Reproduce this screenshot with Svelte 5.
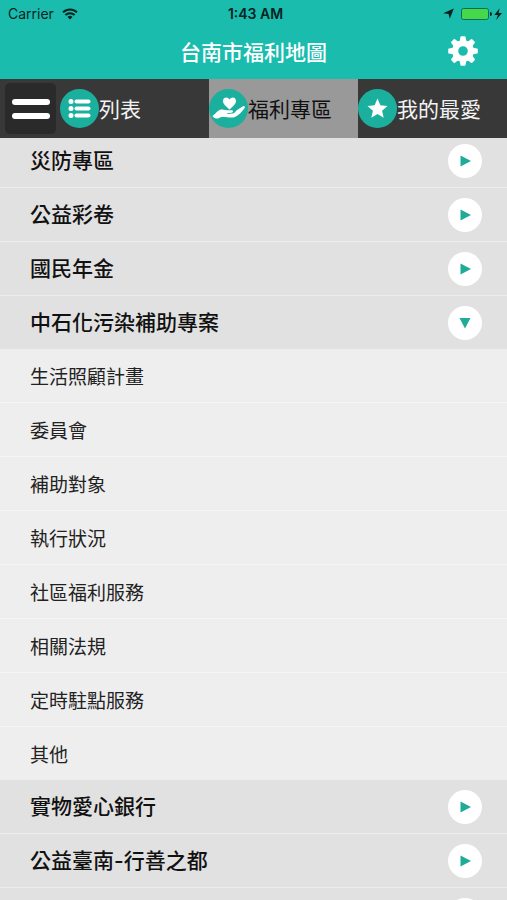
<script lang="ts">
	type Section = {
		title: string;
		items: string[];
	};

	const sections: Section[] = [
		{ title: '災防專區', items: [] },
		{ title: '公益彩卷', items: [] },
		{ title: '國民年金', items: [] },
		{
			title: '中石化污染補助專案',
			items: [
				'生活照顧計畫',
				'委員會',
				'補助對象',
				'執行狀況',
				'社區福利服務',
				'相關法規',
				'定時駐點服務',
				'其他'
			]
		},
		{ title: '實物愛心銀行', items: [] },
		{ title: '公益臺南-行善之都', items: [] },
		{ title: '', items: [] }
	];

	const tabs = [
		{ id: 'list', label: '列表' },
		{ id: 'welfare', label: '福利專區' },
		{ id: 'favorite', label: '我的最愛' }
	];

	const teeth = [0, 45, 90, 135, 180, 225, 270, 315];

	let active = $state('welfare');
	let opened = $state(3);

	function toggle(i: number) {
		opened = opened === i ? -1 : i;
	}
</script>

<svelte:head>
	<title>台南市福利地圖</title>
</svelte:head>

<div class="app">
	<header>
		<div class="status">
			<div class="carrier">
				<span>Carrier</span>
				<svg width="16" height="12" viewBox="0 0 16 12" fill="none" stroke="#06231f" stroke-width="2">
					<path d="M1 4.4 A10 10 0 0 1 15 4.4" />
					<path d="M3.4 7 A6.6 6.6 0 0 1 12.6 7" />
					<path d="M8 11.5 L5.5 9 A3.6 3.6 0 0 1 10.5 9 Z" fill="#06231f" stroke="none" />
				</svg>
			</div>
			<div class="time">1:43 AM</div>
			<div class="power">
				<svg width="11" height="11" viewBox="0 0 11 11">
					<path d="M10.8 0.4 L6.8 10.8 L5.6 6 L0.2 5.2 Z" fill="#06231f" />
				</svg>
				<svg width="42" height="14" viewBox="0 0 42 14">
					<rect x="0.5" y="1.5" width="27" height="11" rx="2" fill="#46d84b" stroke="#0b6b57" />
					<path d="M29 5 a2 2 0 0 1 0 4 z" fill="#06231f" />
					<path d="M38.6 1.2 L33.4 8 H36.8 L35.2 13 L41 6 H37.6 Z" fill="#06231f" />
				</svg>
			</div>
		</div>
		<div class="titlebar">
			<h1>台南市福利地圖</h1>
			<button class="settings" aria-label="設定">
				<svg width="30" height="30" viewBox="-15 -15 30 30">
					{#each teeth as deg}
						<path d="M-3.4 -9 L-2.6 -14 Q-2.5 -14.8 -1.7 -14.8 H1.7 Q2.5 -14.8 2.6 -14 L3.4 -9 Z" fill="#fff" transform="rotate({deg})" />
					{/each}
					<circle r="7.8" fill="none" stroke="#fff" stroke-width="6" />
				</svg>
			</button>
		</div>
	</header>

	<nav>
		<button class="menu" aria-label="選單">
			<span></span>
			<span></span>
		</button>
		{#each tabs as tab}
			<button class="tab" class:active={active === tab.id} onclick={() => (active = tab.id)}>
				<svg width="39" height="39" viewBox="0 0 39 39" fill="#fff">
					<circle cx="19.5" cy="19.5" r="19.5" fill="#1bb09d" />
					{#if tab.id === 'list'}
						<circle cx="11" cy="12.5" r="2.5" />
						<circle cx="11" cy="19.5" r="2.5" />
						<circle cx="11" cy="26.5" r="2.5" />
						<rect x="14.5" y="10.5" width="16" height="4" rx="2" />
						<rect x="14.5" y="17.5" width="16" height="4" rx="2" />
						<rect x="14.5" y="24.5" width="16" height="4" rx="2" />
					{:else if tab.id === 'welfare'}
						<path d="M20.5 20.5 C16.5 17 14 14.6 14 12 C14 8 18.8 7.4 20.5 10.6 C22.2 7.4 27 8 27 12 C27 14.6 24.5 17 20.5 20.5 Z" />
						<path d="M3.5 27 C6 25.5 8 22 11 20.8 C14 19.9 16.5 21.3 19 21.3 H22.5 C24.5 21.3 24.5 23.6 22.5 23.8 L18 24.2 L18.2 24.9 L24 24.6 C25.8 24.4 26.5 21.8 28.5 20.7 L34 17.3 C35.5 16.5 36.5 17.8 35.5 19.2 C33 22.7 30 26 26 27.9 C22 29.5 17 27.5 13 28 C10.5 28.3 9.5 29.8 7.5 29.6 C5.5 29.4 4.3 28.3 3.5 27 Z" />
					{:else}
						<path d="M19.5 9.5 L22.4 16.3 L29.5 16.9 L24.1 21.7 L25.7 28.8 L19.5 25 L13.3 28.8 L14.9 21.7 L9.5 16.9 L16.6 16.3 Z" />
					{/if}
				</svg>
				<span>{tab.label}</span>
			</button>
		{/each}
	</nav>

	<main>
		<div class="list">
			{#each sections as section, i}
				<section>
					<button
						class="row"
						class:open={opened === i && section.items.length > 0}
						aria-label={section.title || '更多'}
						aria-expanded={opened === i}
						onclick={() => toggle(i)}
					>
						<span>{section.title}</span>
						<span class="arrow">
							<svg width="12" height="12" viewBox="0 0 12 12" fill="#1fab98">
								{#if opened === i}
									<path d="M0.5 1 H11.5 L6 11.5 Z" />
								{:else}
									<path d="M1.5 0.5 L12 6 L1.5 11.5 Z" />
								{/if}
							</svg>
						</span>
					</button>
					{#if opened === i}
						<ul>
							{#each section.items as item}
								<li><a href="#top">{item}</a></li>
							{/each}
						</ul>
					{/if}
				</section>
			{/each}
		</div>
	</main>
</div>

<style>
	:global(body) {
		margin: 0;
		background: #e1e1e1;
	}
	.app {
		display: flex;
		flex-direction: column;
		height: 100vh;
		overflow: hidden;
		font-family: 'Noto Sans CJK TC', 'Noto Sans', sans-serif;
		color: #111;
	}
	button {
		margin: 0;
		padding: 0;
		border: none;
		background: none;
		font-family: inherit;
		color: inherit;
		cursor: pointer;
	}
	svg {
		display: block;
		flex: none;
	}
	header {
		flex: none;
		background: #1abcae;
	}
	.status {
		display: grid;
		grid-template-columns: 1fr auto 1fr;
		align-items: center;
		height: 27px;
		padding: 0 4px 0 8px;
		font-family: Inter, sans-serif;
		font-size: 14px;
		color: #06231f;
	}
	.carrier {
		display: flex;
		align-items: center;
		gap: 8px;
	}
	.time {
		font-weight: 600;
	}
	.power {
		display: flex;
		align-items: center;
		justify-content: flex-end;
		gap: 7px;
	}
	.titlebar {
		display: grid;
		grid-template-columns: 1fr auto 1fr;
		align-items: center;
		height: 48px;
		padding: 0 29px 4px;
	}
	h1 {
		grid-column: 2;
		margin: 0;
		font-size: 21px;
		line-height: 30px;
		font-weight: 500;
		color: #fff;
	}
	.settings {
		justify-self: end;
		width: 30px;
		height: 30px;
	}
	nav {
		flex: none;
		display: flex;
		align-items: center;
		height: 59px;
		background: #383838;
	}
	.menu {
		display: flex;
		flex-direction: column;
		align-items: center;
		justify-content: center;
		gap: 8px;
		width: 51px;
		height: 51px;
		margin: 0 4px 0 5px;
		border-radius: 5px;
		background: #2a2a2a;
	}
	.menu span {
		width: 38px;
		height: 6px;
		border-radius: 3px;
		background: #fff;
	}
	.tab {
		flex: 1;
		display: flex;
		align-items: center;
		height: 100%;
		font-size: 21px;
		line-height: 30px;
		white-space: nowrap;
		color: #f2f2f2;
	}
	.tab span {
		padding-bottom: 2px;
	}
	.tab.active {
		background: #999;
		color: #111;
	}
	main {
		flex: 1;
		min-height: 0;
		overflow: hidden;
		background: #e1e1e1;
	}
	/* list rests slightly scrolled under the tabs */
	.list {
		margin-top: -4px;
	}
	.row {
		display: flex;
		align-items: center;
		justify-content: space-between;
		box-sizing: border-box;
		width: 100%;
		height: 54px;
		padding: 0 25px 0 30px;
		border-bottom: 1px solid #ededed;
		font-family: Inter, 'Noto Sans CJK TC', sans-serif;
		font-size: 21px;
		line-height: 30px;
		font-weight: 500;
		text-align: left;
	}
	.row.open {
		height: 53px;
		border-bottom: none;
	}
	.arrow {
		display: flex;
		align-items: center;
		justify-content: center;
		width: 34px;
		height: 34px;
		border-radius: 50%;
		background: #fff;
	}
	ul {
		margin: 0;
		padding: 0;
		list-style: none;
		background: #eee;
	}
	li {
		border-bottom: 1px solid #f5f5f5;
	}
	li:last-child {
		border-bottom: none;
	}
	li a {
		display: block;
		padding: 0 30px;
		font-size: 19px;
		line-height: 53px;
		color: #222;
		text-decoration: none;
	}
</style>
